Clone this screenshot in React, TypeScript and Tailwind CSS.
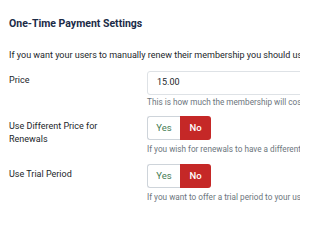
export default function App() {
    // Jsx ----------------------------------->
    return (
        <div className="w-[300px] h-[225px] overflow-hidden bg-white text-[#22262a] font-['Roboto',sans-serif]">
            <div className="pl-[9px] pt-[17px] whitespace-nowrap">
                {/* Heading */}
                <h3 className="text-[10.5px] font-bold leading-[14px] text-[#1b2b47]">One-Time Payment Settings</h3>
                <p className="mt-[18px] text-[9px] leading-[13px]">
                    If you want your users to manually renew their membership you should use this section.
                </p>

                {/* Price */}
                <div className="flex mt-[9px]">
                    <label className="w-[138px] shrink-0 text-[9px] leading-[13px] pt-[3px]">Price</label>
                    <div>
                        <div className="w-[200px] h-[24px] border border-[#dee2e6] rounded-[3px] pl-[9px] flex items-center text-[9px]">15.00</div>
                        <div className="mt-[2px] text-[8.2px] leading-[11px] text-[#6c757d]">This is how much the membership will cost for a one time payment.</div>
                    </div>
                </div>

                {/* Renewals */}
                <div className="flex mt-[8px]">
                    <label className="w-[138px] shrink-0 text-[9px] leading-[13px] pt-[4px] whitespace-normal pr-[20px]">Use Different Price for Renewals</label>
                    <div>
                        <Toggle />
                        <div className="mt-[4px] text-[8.2px] leading-[11px] text-[#6c757d]">If you wish for renewals to have a different price, select yes.</div>
                    </div>
                </div>

                {/* Trial */}
                <div className="flex mt-[9px]">
                    <label className="w-[138px] shrink-0 text-[9px] leading-[13px] pt-[4px]">Use Trial Period</label>
                    <div>
                        <Toggle />
                        <div className="mt-[4px] text-[8.2px] leading-[11px] text-[#6c757d]">If you want to offer a trial period to your users, select yes.</div>
                    </div>
                </div>
            </div>
        </div>
    )
}

function Toggle() {
    return (
        <div className="flex h-[24px] w-[64px] text-[9.5px]">
            <span className="w-[33px] flex items-center justify-center border border-r-0 border-[#ced4da] rounded-l-[3px] text-[#457d54]">Yes</span>
            <span className="w-[31px] flex items-center justify-center bg-[#c52827] rounded-r-[3px] text-white font-medium">No</span>
        </div>
    )
}
